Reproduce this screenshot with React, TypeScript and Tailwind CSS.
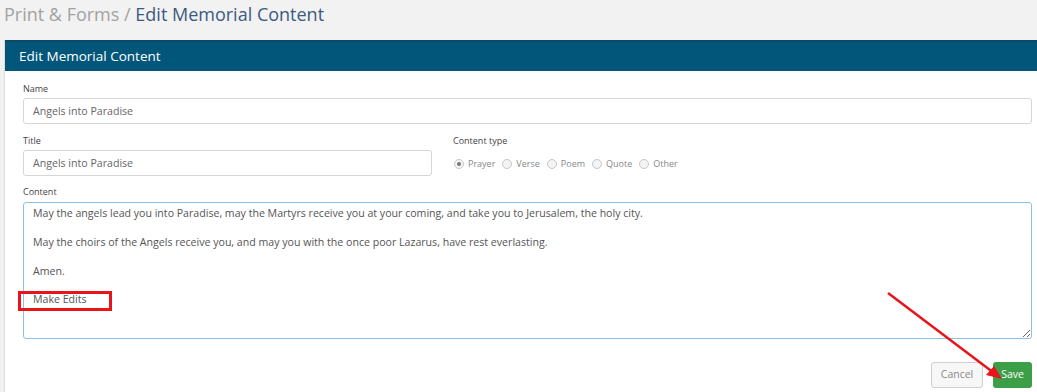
import React from "react";

const font = { fontFamily: '"Open Sans", "Liberation Sans", sans-serif' };

const content = `May the angels lead you into Paradise, may the Martyrs receive you at your coming, and take you to Jerusalem, the holy city.

May the choirs of the Angels receive you, and may you with the once poor Lazarus, have rest everlasting.

Amen.

Make Edits`;

function Radio({ label, checked }: { label: string; checked?: boolean }) {
  return (
    <label className="flex items-center gap-[4px] mr-[7px]">
      <span className="w-[10px] h-[10px] rounded-full border border-[#c8c8c8] bg-[#f4f4f4] flex items-center justify-center">
        {checked && <span className="w-[4px] h-[4px] rounded-full bg-[#777]" />}
      </span>
      <span className="text-[9px] leading-[12px] text-[#888]">{label}</span>
    </label>
  );
}

export default function App() {
  return (
    <div className="w-[1037px] h-[392px] bg-[#f2f2f2] overflow-hidden relative" style={font}>
      {/* breadcrumb */}
      <div className="h-[40px] pl-[4px] pt-[1px] text-[18px] leading-[26px]">
        <span className="text-[#a2a2a2]">Print &amp; Forms / </span>
        <span className="text-[#3b5a7e]">Edit Memorial Content</span>
      </div>

      <div className="ml-[4px] bg-white border-l border-[#dedede]">
        <div className="h-[31px] bg-[#02567a] border-t-2 border-[#0c4a66] pl-[14px] flex items-center text-white text-[13.5px]">
          Edit Memorial Content
        </div>

        <div className="pl-[18px] pr-[5px] pt-[12px] pb-[20px]">
          <div className="text-[9px] leading-[12px] text-[#444] mb-[3px]">Name</div>
          <input
            readOnly
            value="Angels into Paradise"
            className="block w-full h-[26px] border border-[#d6d6d6] rounded-[3px] px-[9px] text-[10.6px] text-[#666] outline-none"
          />

          <div className="flex mt-[11px]">
            <div className="w-[409px]">
              <div className="text-[9px] leading-[12px] text-[#444] mb-[3px]">Title</div>
              <input
                readOnly
                value="Angels into Paradise"
                className="block w-full h-[26px] border border-[#d6d6d6] rounded-[3px] px-[9px] text-[10.6px] text-[#666] outline-none"
              />
            </div>
            <div className="ml-[21px]">
              <div className="text-[9px] leading-[12px] text-[#444] mb-[11px]">Content type</div>
              <div className="flex items-center pl-[1px]">
                <Radio label="Prayer" checked />
                <Radio label="Verse" />
                <Radio label="Poem" />
                <Radio label="Quote" />
                <Radio label="Other" />
              </div>
            </div>
          </div>

          <div className="text-[9px] leading-[12px] text-[#444] mt-[10px] mb-[4px]">Content</div>
          <textarea
            readOnly
            value={content}
            className="block w-full h-[137px] border border-[#8ebfe6] rounded-[3px] px-[9px] py-[3px] text-[10.6px] leading-[14.4px] text-[#555] outline-none resize-y"
          />

          <div className="flex justify-end gap-[10px] mt-[23px]">
            <button className="h-[26px] px-[9px] border border-[#cfcfcf] rounded-[3px] bg-[#f7f7f7] text-[10.5px] text-[#888]">
              Cancel
            </button>
            <button className="h-[26px] px-[8px] rounded-[3px] bg-[#3d9e48] text-[10.5px] text-white">
              Save
            </button>
          </div>
        </div>
      </div>

      {/* annotations */}
      <div className="absolute left-[18px] top-[291px] w-[94px] h-[20px] border-[3px] border-[#e8141a]" />
      <svg className="absolute left-0 top-0" width="1037" height="392">
        <line x1="888" y1="293" x2="994" y2="373" stroke="#e8141a" strokeWidth="2.5" />
        <polygon points="1002,379 986,375 994,366" fill="#e8141a" />
      </svg>
    </div>
  );
}
